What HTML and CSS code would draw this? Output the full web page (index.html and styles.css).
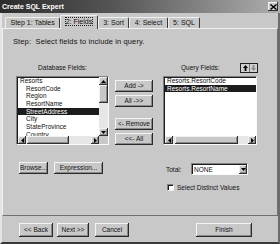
FILE: index.html
```html
<!DOCTYPE html>
<html>
<head>
    <link rel="stylesheet" href="styles.css">
</head>
<body>
    <div class="window">
        <div class="titlebar">
            <span class="title">Create SQL Expert</span>
            <span class="close">
                <svg viewBox="0 0 7 6" width="7" height="6"><path d="M0.5 0.5l6 5M6.5 0.5l-6 5" stroke="#000" stroke-width="1.4"/></svg>
            </span>
        </div>

        <div class="tabs">
            <div class="tab">Step 1: Tables</div>
            <div class="tab active"><span class="focus">2: Fields</span></div>
            <div class="tab">3: Sort</div>
            <div class="tab">4: Select</div>
            <div class="tab">5: SQL</div>
        </div>

        <div class="panel">
            <div class="step">Step:&nbsp; Select fields to include in query.</div>

            <div class="fields">
                <div class="col">
                    <div class="label center">Database Fields:</div>
                    <div class="listbox with-v">
                        <ul class="items">
                            <li>Resorts</li>
                            <li class="child">ResortCode</li>
                            <li class="child">Region</li>
                            <li class="child">ResortName</li>
                            <li class="child selected">StreetAddress</li>
                            <li class="child">City</li>
                            <li class="child">StateProvince</li>
                            <li class="child">Country</li>
                        </ul>
                        <div class="vscroll">
                            <span class="sbtn"><svg viewBox="0 0 5 3" width="5" height="3"><path d="M2.5 0L5 3H0z"/></svg></span>
                            <span class="vthumb"></span>
                            <span class="track"></span>
                            <span class="sbtn"><svg viewBox="0 0 5 3" width="5" height="3"><path d="M0 0h5L2.5 3z"/></svg></span>
                        </div>
                        <div class="hscroll">
                            <span class="sbtn"><svg viewBox="0 0 3 5" width="3" height="5"><path d="M0 2.5L3 0v5z"/></svg></span>
                            <span class="hthumb left-thumb"></span>
                            <span class="track"></span>
                            <span class="sbtn"><svg viewBox="0 0 3 5" width="3" height="5"><path d="M0 0l3 2.5L0 5z"/></svg></span>
                        </div>
                        <div class="corner"></div>
                    </div>
                </div>

                <div class="movers">
                    <button class="btn">Add -&gt;</button>
                    <button class="btn">All -&gt;&gt;</button>
                    <button class="btn spaced">&lt;- Remove</button>
                    <button class="btn">&lt;&lt;- All</button>
                </div>

                <div class="col">
                    <div class="qhead">
                        <span class="label">Query Fields:</span>
                        <div class="order">
                            <span class="obtn"><svg viewBox="0 0 5 6" width="5" height="6"><path d="M2.5 0L5 3H3.4v3H1.6V3H0z" fill="#000"/></svg></span>
                            <span class="obtn"><svg viewBox="0 0 5 6" width="5" height="6"><path d="M2.5 6L5 3H3.4V0H1.6v3H0z" fill="#8a8a8a"/></svg></span>
                        </div>
                    </div>
                    <div class="listbox query">
                        <ul class="items">
                            <li>Resorts.ResortCode</li>
                            <li class="selected">Resorts.ResortName</li>
                        </ul>
                        <div class="hscroll">
                            <span class="sbtn"><svg viewBox="0 0 3 5" width="3" height="5"><path d="M0 2.5L3 0v5z"/></svg></span>
                            <span class="hthumb wide-thumb"></span>
                            <span class="track"></span>
                            <span class="sbtn"><svg viewBox="0 0 3 5" width="3" height="5"><path d="M0 0l3 2.5L0 5z"/></svg></span>
                        </div>
                    </div>
                </div>

                <div class="tools">
                    <button class="btn browse">Browse...</button>
                    <button class="btn expression">Expression...</button>
                </div>

                <div class="options">
                    <div class="total-row">
                        <span class="total-label">Total:</span>
                        <div class="select">
                            <span class="select-value">NONE</span>
                            <span class="sbtn drop"><svg viewBox="0 0 5 3" width="5" height="3"><path d="M0 0h5L2.5 3z"/></svg></span>
                        </div>
                    </div>
                    <label class="check-row">
                        <span class="checkbox"></span>
                        <span>Select Distinct Values</span>
                    </label>
                </div>
            </div>
        </div>

        <div class="footer">
            <button class="btn back">&lt;&lt; Back</button>
            <button class="btn next">Next &gt;&gt;</button>
            <button class="btn cancel">Cancel</button>
            <button class="btn finish">Finish</button>
        </div>
    </div>
</body>
</html>
```

FILE: styles.css
```css
* {
    box-sizing: border-box;
}

body {
    margin: 0;
    background: #c8c8c8;
    font-family: 'Liberation Sans', Arial, sans-serif;
    font-size: 6.5px;
    color: #111;
}

.window {
    width: 280px;
    height: 244px;
    background: #c8c8c8;
    border: 2px solid #c8c8c8;
    border-top: none;
    border-left-color: #e4e4e4;
    border-right-color: #6c6c6c;
    border-bottom-color: #3a3a3a;
    display: flex;
    flex-direction: column;
}

.titlebar {
    height: 13px;
    margin: 0 -2px;
    padding: 0 2px;
    background: linear-gradient(to right, #2c2c2c, #555 40%, #adadad);
    display: flex;
    align-items: center;
    justify-content: space-between;
}

.title {
    color: #fff;
    font-weight: bold;
    font-size: 7px;
}

.close {
    width: 10px;
    height: 9px;
    background: #c8c8c8;
    box-shadow: inset -1px -1px #303030, inset 1px 1px #f2f2f2;
    display: flex;
    align-items: center;
    justify-content: center;
}

/* tabs */
.tabs {
    height: 13px;
    margin-top: 2px;
    padding-left: 3px;
    display: flex;
    align-items: flex-end;
    font-size: 7px;
}

.tab {
    height: 11px;
    padding: 0 4.5px;
    line-height: 10px;
    border: 1px solid #f0f0f0;
    border-bottom: none;
    border-right-color: #3a3a3a;
    border-radius: 2px 2px 0 0;
    white-space: nowrap;
}

.tab.active {
    height: 14px;
    margin-bottom: -1px;
    padding-top: 1px;
    background: #c8c8c8;
    position: relative;
    z-index: 1;
}

.focus {
    outline: 1px dotted #222;
}

/* tab panel */
.panel {
    height: 188px;
    border: 1px solid #f0f0f0;
    border-right-color: #707070;
    border-bottom-color: #707070;
    padding: 9px 0 0 10px;
}

.step {
    height: 8px;
    line-height: 8px;
    font-size: 7.5px;
    letter-spacing: 0.12px;
}

.fields {
    margin-top: 18px;
    margin-left: 3px;
    display: grid;
    grid-template-columns: 93px 54px 94px;
}

.col {
    display: flex;
    flex-direction: column;
}

.label {
    height: 12px;
    line-height: 8px;
}

.label.center {
    text-align: center;
}

.qhead {
    height: 12px;
    display: flex;
    align-items: flex-start;
}

.qhead .label {
    margin-left: 18px;
}

.order {
    margin-left: auto;
    margin-right: -1px;
    margin-top: -1px;
    display: flex;
    border: 1px solid #222;
}

.obtn {
    width: 8px;
    height: 8px;
    display: flex;
    align-items: center;
    justify-content: center;
    background: #d0d0d0;
}

.obtn + .obtn {
    border-left: 1px solid #777;
}

/* list boxes */
.listbox {
    height: 69px;
    background: #fff;
    border: 1px solid #808080;
    border-right-color: #fafafa;
    border-bottom-color: #fafafa;
    box-shadow: inset 1px 1px #1c1c1c;
    padding: 0 0 0 1px;
    display: grid;
    grid-template-columns: 1fr 9px;
    grid-template-rows: 1fr 8px;
    overflow: hidden;
}

.listbox.query {
    grid-template-columns: 1fr;
}

.items {
    list-style: none;
    margin: 0;
    padding: 0;
    overflow: hidden;
}

.items li {
    height: 7.7px;
    line-height: 7.7px;
    padding-left: 2px;
    white-space: nowrap;
}

.items li.child {
    padding-left: 8px;
}

.items li.selected {
    background: #1c1c1c;
    color: #fff;
}

.vscroll {
    display: flex;
    flex-direction: column;
    background: #e6e6e6;
}

.hscroll {
    display: flex;
    background: #e6e6e6;
}

.track {
    flex: 1;
}

.sbtn {
    width: 8px;
    height: 8px;
    flex: none;
    background: #c8c8c8;
    box-shadow: inset -1px -1px #303030, inset 1px 1px #f2f2f2, inset -2px -2px #8a8a8a;
    display: flex;
    align-items: center;
    justify-content: center;
}

.vscroll .sbtn {
    width: 9px;
}

.vthumb {
    height: 18px;
    background: #c8c8c8;
    box-shadow: inset -1px -1px #303030, inset 1px 1px #f2f2f2, inset -2px -2px #8a8a8a;
}

.hthumb {
    background: #c8c8c8;
    box-shadow: inset -1px -1px #303030, inset 1px 1px #f2f2f2, inset -2px -2px #8a8a8a;
}

.left-thumb {
    width: 42px;
    margin-left: 1px;
}

.wide-thumb {
    width: 63px;
    margin-left: 2px;
}

.corner {
    background: #c8c8c8;
}

/* buttons */
.btn {
    height: 12px;
    padding: 0;
    border: none;
    background: #c8c8c8;
    box-shadow: inset -1px -1px #2a2a2a, inset 1px 1px #f4f4f4, inset -2px -2px #8a8a8a;
    font-family: inherit;
    font-size: 6.5px;
    color: #111;
    line-height: 12px;
}

.movers {
    padding: 16px 10px 0 6px;
    display: flex;
    flex-direction: column;
    gap: 3px;
}

.movers .btn.spaced {
    margin-top: 8px;
}

.tools {
    margin-top: 17px;
    padding-left: 3px;
    display: flex;
    gap: 6px;
}

.browse {
    width: 29px;
}

.expression {
    width: 49px;
}

.options {
    grid-column: 3;
    margin-top: 18px;
    padding-left: 3px;
}

.total-row {
    display: flex;
    align-items: center;
}

.total-label {
    width: 25px;
}

.select {
    width: 57px;
    height: 12px;
    background: #fff;
    border: 1px solid #808080;
    border-right-color: #fafafa;
    border-bottom-color: #fafafa;
    box-shadow: inset 1px 1px #1c1c1c;
    padding: 1px 0 0 2px;
    display: flex;
    align-items: center;
}

.select-value {
    flex: 1;
}

.sbtn.drop {
    width: 8px;
    height: 9px;
}

.check-row {
    margin-top: 9px;
    margin-left: 1px;
    display: flex;
    align-items: center;
    gap: 3px;
}

.checkbox {
    width: 7px;
    height: 7px;
    background: #fff;
    border: 1px solid #808080;
    border-right-color: #f4f4f4;
    border-bottom-color: #f4f4f4;
    box-shadow: inset 1px 1px #1c1c1c;
}

/* footer */
.footer {
    height: 14px;
    margin-top: 7px;
    padding: 0 26px 0 17px;
    display: flex;
}

.footer .btn {
    height: 14px;
    line-height: 14px;
}

.back {
    width: 34px;
}

.next {
    width: 32px;
    margin-left: 4px;
}

.cancel {
    width: 34px;
    margin-left: 6px;
}

.finish {
    width: 56px;
    margin-left: auto;
}
```
